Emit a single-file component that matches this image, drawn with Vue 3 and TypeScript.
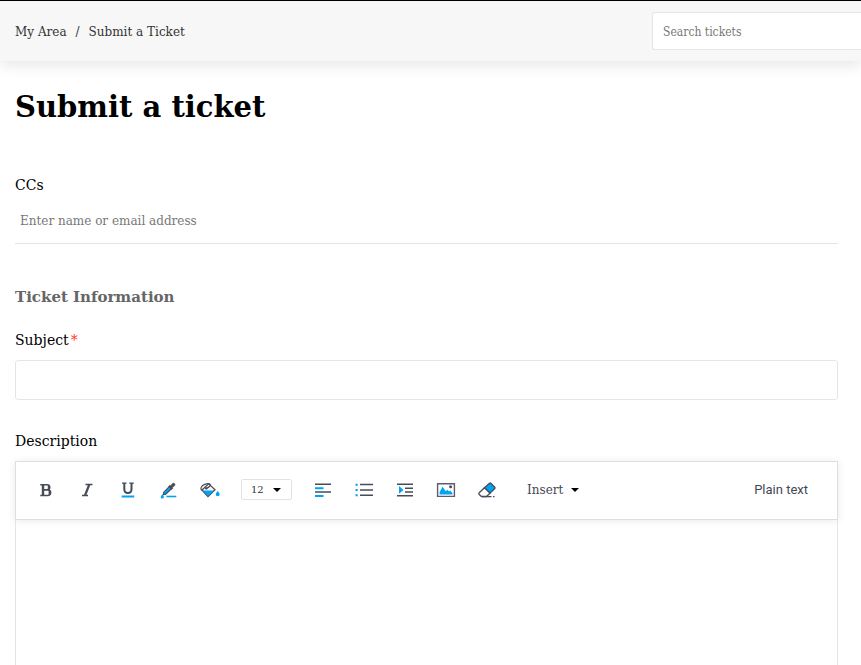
<script setup lang="ts">
import { ref } from 'vue'

const search = ref('')
const ccs = ref('')
const subject = ref('')
const description = ref('')
const fontSize = ref('12')
const sizes: string[] = ['8', '10', '12', '14', '18', '24']
</script>

<template>
  <div class="page">
    <header class="topbar">
      <nav class="crumbs" aria-label="Breadcrumb">
        <a href="#">My Area</a>
        <span class="sep">/</span>
        <a href="#">Submit a Ticket</a>
      </nav>
      <input v-model="search" class="search" type="search" placeholder="Search tickets" aria-label="Search tickets" />
    </header>

    <form class="form" @submit.prevent>
      <h1>Submit a ticket</h1>

      <label class="label" for="ccs">CCs</label>
      <input id="ccs" v-model="ccs" class="ccs" type="text" placeholder="Enter name or email address" />

      <h2>Ticket Information</h2>
      <label class="label" for="subject">Subject<span class="star">*</span></label>
      <input id="subject" v-model="subject" class="subject" type="text" required />

      <label class="label description-label" for="description">Description</label>
      <div class="editor">
        <div class="toolbar" role="toolbar" aria-label="Formatting">
          <div class="group">
            <button type="button" class="tool" aria-label="Bold">
              <svg width="20" height="20" viewBox="0 0 20 20" fill="none" stroke="#484b58">
                <path d="M4.300 4.700h6.800a2.600 2.600 0 0 1 0 5.200H7M11 9.900h.8a2.800 2.800 0 0 1 0 5.600H4.300" stroke-width="1.600" />
                <path d="M7 4.500v11" stroke-width="2.400" />
                <path d="M12.700 5.500v3.600M13.500 11v3.700" stroke-width="1.800" />
              </svg>
            </button>
            <button type="button" class="tool" aria-label="Italic">
              <svg width="20" height="20" viewBox="0 0 20 20" fill="none" stroke="#484b58">
                <path d="M8.500 4.500h7M5 15.500h6" stroke-width="1.400" />
                <path d="M12.300 4.500l-4.300 11" stroke-width="2.200" />
              </svg>
            </button>
            <button type="button" class="tool" aria-label="Underline">
              <svg width="20" height="20" viewBox="0 0 20 20" fill="none" stroke="#484b58">
                <path d="M4 3.200h4.500M11.300 3.200h4.500" stroke-width="1.300" />
                <path d="M6.300 3v6.300c0 2.500 1.300 3.700 3.600 3.700s3.600-1.200 3.600-3.700V3" stroke-width="2" />
                <path d="M3.700 16.500h12.500" stroke="#00a3f5" stroke-width="2" />
              </svg>
            </button>
            <button type="button" class="tool" aria-label="Text color">
              <svg width="20" height="20" viewBox="0 0 20 20" fill="none">
                <path d="M4.700 12.300L10.500 6.200l2.300 2.300-6 5.700-2.600.6z" fill="#00a3f5" stroke="#484b58" stroke-width="1.100" />
                <path d="M10.600 5.400l1.300.3 1.700-2.100c1.200-1.300 3.200.6 2 2l-2.200 1.900.2 1.100-1 .8-2.800-2.900z" fill="#484b58" stroke="#484b58" stroke-width=".7" />
                <path d="M3.300 14.200c.8 1.300 1.600 2 1.600 2.700a1.600 1.600 0 0 1-3.200 0c0-.7.800-1.400 1.600-2.700z" fill="#00a3f5" />
                <path d="M7.500 16.500h9.800" stroke="#00a3f5" stroke-width="1.600" />
              </svg>
            </button>
            <button type="button" class="tool" aria-label="Background color">
              <svg width="20" height="20" viewBox="0 0 20 20" fill="none">
                <path d="M2 10L8.700 3.800l6.300 6L8 16.500z" fill="#fff" stroke="#484b58" stroke-width="1.300" />
                <path d="M2.600 10.600h11.600L8 16z" fill="#00a3f5" />
                <path d="M1.700 10.500C-.1 8 1.700 5.700 4.700 4.400c3.800-1.700 6.500-.6 5.300 1.500-.8 1.300-2.200 2.100-3.800 2.500" stroke="#484b58" stroke-width="1.200" />
                <circle cx="6.300" cy="8.400" r="1.200" fill="#484b58" />
                <path d="M17.700 11c1.200 1.500 2 2.500 2 3.300a2 2 0 0 1-4 0c0-.8.800-1.800 2-3.300z" fill="#00a3f5" />
              </svg>
            </button>
          </div>

          <div class="size">
            <select v-model="fontSize" aria-label="Font size">
              <option v-for="s in sizes" :key="s" :value="s">{{ s }}</option>
            </select>
            <svg class="caret" width="8" height="4" viewBox="0 0 8 4"><path d="M0 0h8L4 4z" /></svg>
          </div>

          <div class="group">
            <button type="button" class="tool" aria-label="Align left">
              <svg width="20" height="20" viewBox="0 0 20 20" fill="none" stroke="#484b58" stroke-width="1.500">
                <path d="M2 4.300h16M2 12h16" />
                <path d="M2 8.200h8.500M2 15.900h8.500" stroke="#00a3f5" stroke-width="2" />
              </svg>
            </button>
            <button type="button" class="tool" aria-label="Bulleted list">
              <svg width="20" height="20" viewBox="0 0 20 20" fill="none" stroke="#484b58" stroke-width="1.600">
                <path d="M6 4.500h13M6 10h13M6 15.300h13" />
                <path d="M1.500 4.800h2.200M1.500 10h2.200M1.500 15.200h2.200" stroke="#00a3f5" stroke-width="2" />
              </svg>
            </button>
            <button type="button" class="tool" aria-label="Indent">
              <svg width="20" height="20" viewBox="0 0 20 20" fill="none" stroke="#484b58" stroke-width="1.600">
                <path d="M2 4.300h16M10 8.200h8M10 12h8M2 15.800h16" />
                <path d="M4 6l4.500 4L4 13.700z" fill="#00a3f5" stroke="none" />
              </svg>
            </button>
            <button type="button" class="tool" aria-label="Insert image">
              <svg width="20" height="20" viewBox="0 0 20 20" fill="none">
                <path d="M1.600 3.700h16.800v12.700H1.600z" stroke="#5b5e69" stroke-width="1.400" />
                <path d="M3.600 14.500V12l3-5.200 3.200 4.400 1.700-1.500 1.500 1.700 1.200-1 2.200 2.600v1.500z" fill="#00a3f5" />
                <circle cx="14.600" cy="6.800" r="1.500" fill="#484b58" />
              </svg>
            </button>
            <button type="button" class="tool" aria-label="Clear formatting">
              <svg width="20" height="20" viewBox="0 0 20 20" fill="none" stroke="#484b58" stroke-width="1.300">
                <path d="M7.500 7.700L12.500 3.200q.7-.6 1.300 0l4 4q.6.700 0 1.300l-4.800 4.700z" fill="#00a3f5" />
                <path d="M7.500 7.700l5.500 5.500-3.500 3.300H4.500L2.200 14.600q-.9-.9 0-1.800z" fill="#fff" />
                <path d="M5 16.700h9.500M16 16.700h1.500" />
              </svg>
            </button>
          </div>

          <button type="button" class="insert">
            Insert
            <svg width="8" height="4" viewBox="0 0 8 4"><path d="M0 0h8L4 4z" /></svg>
          </button>
          <button type="button" class="plain">Plain text</button>
        </div>
        <textarea id="description" v-model="description"></textarea>
      </div>
    </form>
  </div>
</template>

<style>
body {
  margin: 0;
  background: #fff;
}
</style>

<style scoped>
* {
  box-sizing: border-box;
}

.page {
  display: flex;
  flex-direction: column;
  min-height: 100vh;
  font-family: 'DejaVu Serif', Georgia, serif;
  font-size: 14px;
  line-height: 20px;
  color: #000;
}

input,
button,
select,
textarea {
  font-family: inherit;
  outline: none;
}

.topbar {
  display: flex;
  align-items: center;
  justify-content: space-between;
  height: 61px;
  padding-left: 15px;
  border-top: 1px solid #000;
  background: #f7f7f7;
  box-shadow: 0 4px 14px rgba(0, 0, 0, 0.1);
}

.crumbs {
  display: flex;
  gap: 9px;
  padding-top: 2px;
  font-size: 12px;
  color: #333;
}

.crumbs a {
  color: inherit;
  text-decoration: none;
}

.search {
  width: 209px;
  height: 38px;
  padding: 2px 10px 0;
  border: 1px solid #e2e6ea;
  border-right: 0;
  border-radius: 3px 0 0 3px;
  background: #fff;
  font-family: 'DejaVu Serif Condensed', 'DejaVu Serif', Georgia, serif;
  font-size: 12px;
  appearance: none;
}

input::placeholder {
  color: #777;
  opacity: 1;
}

.form {
  display: flex;
  flex: 1;
  flex-direction: column;
  padding: 0 23px 0 15px;
}

h1 {
  margin: 26px 0 48px;
  font-size: 29px;
  line-height: 40px;
}

h2 {
  margin: 43px 0 23px;
  font-size: 15px;
  line-height: 20px;
  color: #666;
}

.ccs {
  height: 45px;
  margin-top: 4px;
  padding: 0 5px;
  border: 0;
  border-bottom: 1px solid #e4e4e4;
  font-size: 12px;
}

.star {
  margin-left: 2px;
  color: #ff3b1f;
}

.subject {
  height: 40px;
  margin-top: 10px;
  padding: 0 10px;
  border: 1px solid #e2e6ea;
  border-radius: 3px;
  font-size: 12px;
}

.description-label {
  margin-top: 31px;
}

.editor {
  display: flex;
  flex: 1;
  flex-direction: column;
  margin-top: 10px;
}

.toolbar {
  display: flex;
  align-items: center;
  height: 59px;
  padding: 0 29px 2px 9px;
  border: 1px solid #dcdfe2;
  background: #fff;
  box-shadow: 0 1px 8px rgba(0, 0, 0, 0.09);
}

.group {
  display: flex;
}

.tool {
  display: flex;
  align-items: center;
  justify-content: center;
  width: 41px;
  height: 30px;
  padding: 0;
  border: 0;
  background: none;
}

.size {
  display: grid;
  align-items: center;
  margin: 0 10px 0 11px;
}

.size select {
  grid-area: 1 / 1;
  width: 51px;
  height: 21px;
  padding: 0 9px;
  border: 1px solid #e2e2e2;
  border-radius: 2px;
  background: #fff;
  font-size: 10px;
  color: #333;
  appearance: none;
}

.caret {
  grid-area: 1 / 1;
  justify-self: end;
  margin-right: 11px;
  pointer-events: none;
}

.insert,
.plain {
  padding: 0;
  border: 0;
  background: none;
  font-size: 12px;
  line-height: 20px;
  color: #444855;
}

.insert {
  display: flex;
  align-items: center;
  gap: 8px;
  margin-left: 20px;
}

.plain {
  margin-left: auto;
  font-family: Roboto, sans-serif;
  font-size: 13px;
}

textarea {
  flex: 1;
  min-height: 140px;
  padding: 12px;
  border: 1px solid #e2e4e6;
  border-width: 0 1px;
  background: transparent;
  font-size: 14px;
  resize: none;
}
</style>
